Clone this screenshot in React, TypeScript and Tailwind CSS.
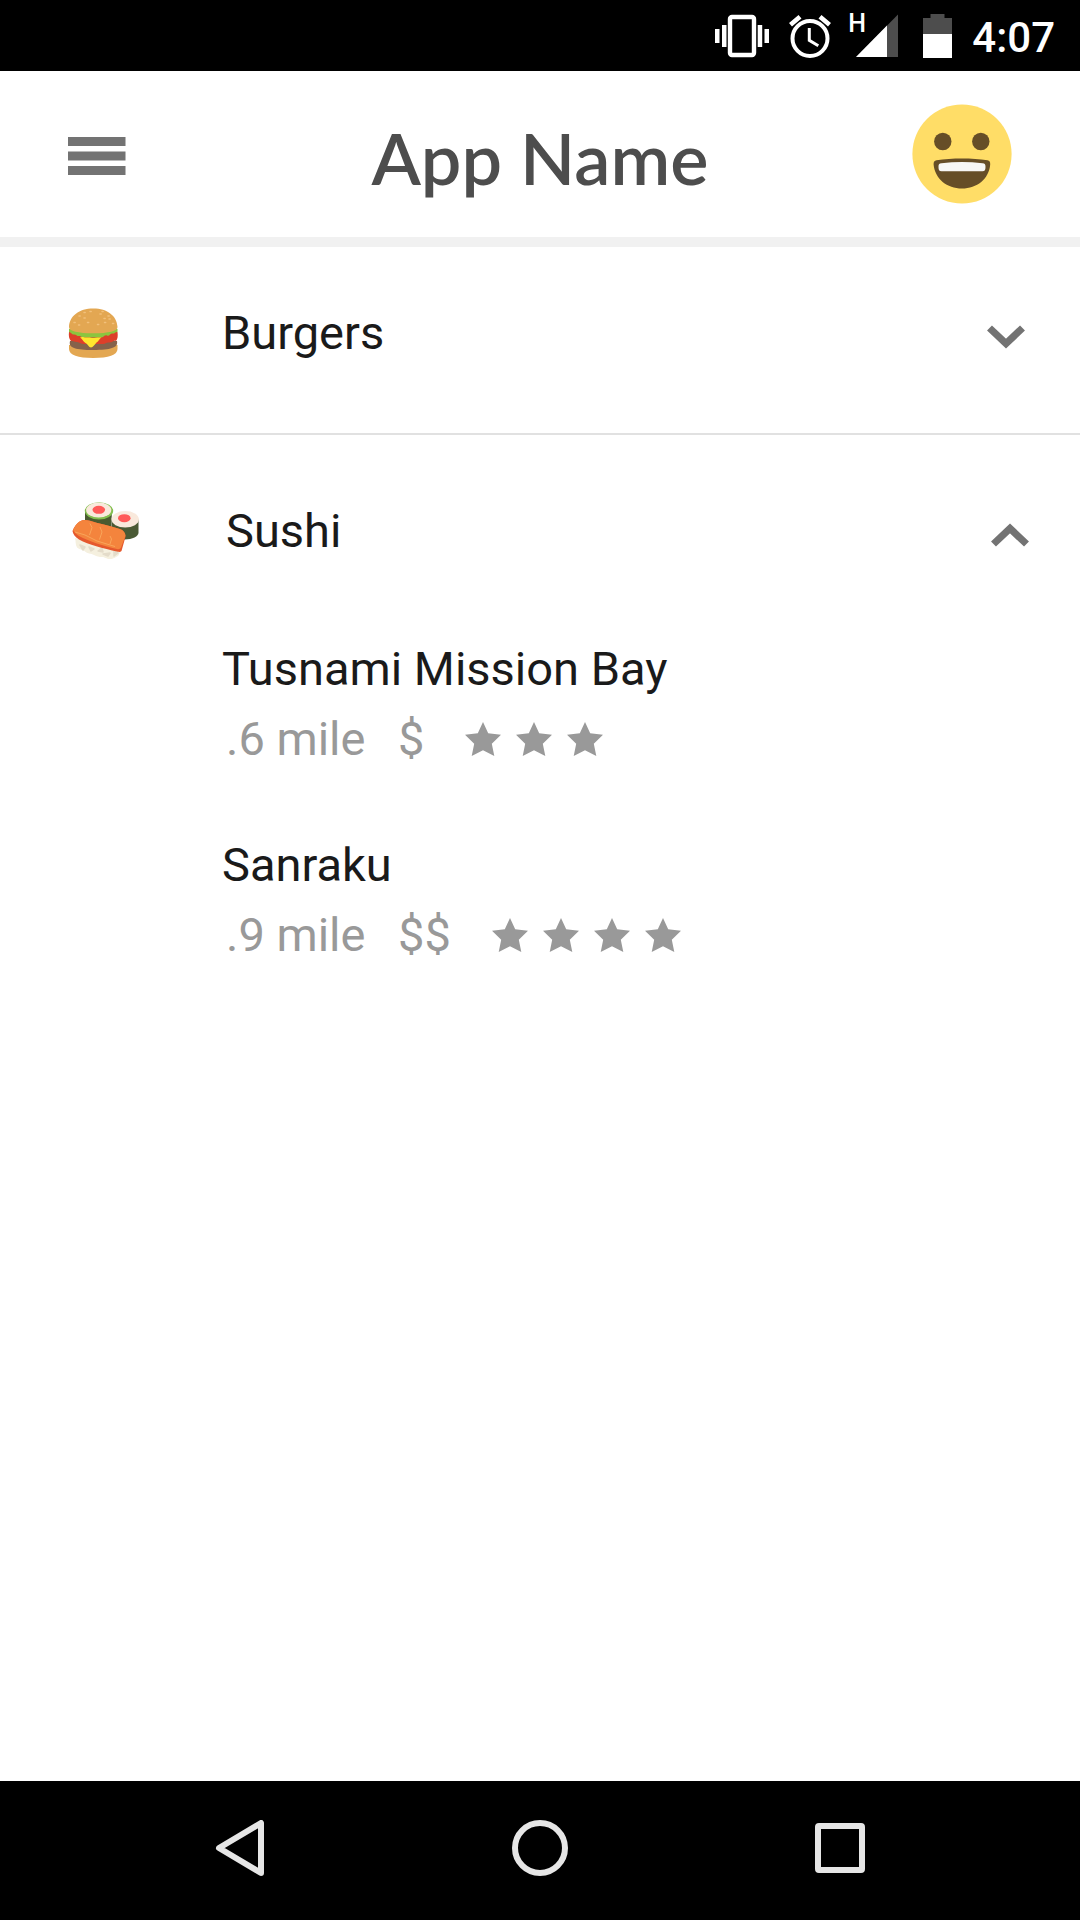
// App.tsx
import React, { useState } from "react";

interface Place {
  name: string;
  distance: string;
  price: string;
  stars: number;
}

const sushiPlaces: Place[] = [
  { name: "Tusnami Mission Bay", distance: ".6 mile", price: "$", stars: 3 },
  { name: "Sanraku", distance: ".9 mile", price: "$$", stars: 4 },
];

const StatusBar: React.FC = () => (
  <div className="flex h-[71px] items-center justify-end bg-black pr-[25px] text-white">
    {/* vibrate */}
    <svg className="mr-5 h-11 w-[54px]" viewBox="0 0 54 44" fill="currentColor">
      <rect x="15" y="3" width="24" height="38" rx="2" fill="none" stroke="currentColor" strokeWidth="4.4" />
      <path d="M0 15h4.5v14H0zM7 11h4.5v22H7zM42.700 11h4.500v22h-4.500zM49.500 15h4.500v14h-4.500z" />
    </svg>
    {/* alarm */}
    <svg className="mr-[17px] h-11 w-[42px]" viewBox="0 0 42 44" fill="none" stroke="currentColor">
      <circle cx="21" cy="24.500" r="17.500" strokeWidth="4" />
      <path d="M1.500 10.800L11 2.800M40.500 10.800L31 2.800" strokeWidth="4.600" />
      <path d="M20.300 14v12.300l9 5.400" strokeWidth="3" />
    </svg>
    {/* signal, with the network type over its corner */}
    <div className="relative mr-6">
      <svg className="h-11 w-[51px]" viewBox="-3 0 51 44" fill="currentColor">
        <path d="M5 43L47 0.500V43z" fill="#4d4d4d" />
        <path d="M5 43L36 11.600V43z" />
      </svg>
      <span className="absolute -top-1 left-0 text-[25px] leading-7 font-medium">H</span>
    </div>
    {/* battery */}
    <svg className="mr-5 h-11 w-[29px]" viewBox="0 0 29 44" fill="currentColor">
      <path d="M0 4h7.500V0h14v4H29v16H0z" fill="#4d4d4d" />
      <path d="M0 20h29v24H0z" />
    </svg>
    <span className="pt-1 text-[42px] leading-none font-medium">4:07</span>
  </div>
);

const FaceIcon: React.FC = () => (
  <svg className="h-[100px] w-[100px]" viewBox="0 0 100 100">
    <circle cx="50" cy="50" r="49.600" fill="#ffdd67" />
    <circle cx="30.800" cy="37.500" r="8.700" fill="#664e27" />
    <circle cx="68.800" cy="37.500" r="8.700" fill="#664e27" />
    <path
      d="M24.500 56.200C40 53.800 60 53.800 75.500 56.200C77.500 56.500 78.400 58 78.200 60.500C77 75 65 84.500 50 84.500S23 75 21.600 60.500C21.400 58 22.500 56.500 24.500 56.200z"
      fill="#664e27"
    />
    <path
      d="M29.500 59.200C43 57.600 57 57.600 70.500 59.200C73 59.500 73.600 60.500 73.500 63C73.400 66 73 67.300 70.500 67.300H29.500C27 67.300 26.600 66 26.500 63C26.400 60.500 27 59.500 29.500 59.200z"
      fill="#f7f7f5"
    />
  </svg>
);

const BurgerIcon: React.FC = () => (
  <svg className="h-[50px] w-[50px]" viewBox="0 0 50 50">
    <path d="M1 37h48.500v4c0 6-9 9-24.300 9S1 47 1 41z" fill="#e3a752" />
    <path d="M2 33h47c1.200 6-4 9-24 9S0.500 39 2 33z" fill="#85624b" />
    <path d="M1 24h48.500c0.500 4 .3 7-1.500 9-3-1-4 2-7 1.500s-3 1.500-6 1.500H16c-3 0-4-1.500-7-2s-4-1-6-1c-2-2-2.500-5-2-9z" fill="#dd3f2a" />
    <path d="M1 21h48.500v3c-2-.5-3 2-5 1.500s-3 3-5.500 2-4 2.800-7 2H16c-2.500.5-3-2-5-1.500s-3-2-5-1.500-3-2.500-5-2.500z" fill="#8bc53f" />
    <path d="M12 29.500c3-1.500 4 .5 7 0s5 1 7 .5 5-.5 7.500-.5c-2 1-3 4-5 5-2 2-3.500 5-5.500 5s-3-3-5.500-4.500-3-4-5.500-5.500z" fill="#ffe62e" />
    <path d="M1 19C1.500 8 11 0.500 25.300 0.500S49 8 49.500 19c.3 4-9 6.300-24.200 6.300S.7 23 1 19z" fill="#e3a752" />
    <path
      d="M16 4.500h1.200M22 3.500h1.200M11 8h1.200M16 10h1.200M6 14.500h1.200M10.500 17h1.200M19.500 14.500h1.200M34 3.500h1.200M32 6h1.200M40 8h1.200M36 10.500h1.200M41 11h1.200M36.500 14.500h1.200M44.500 15.500h1.200M29.500 16.500h1.200"
      stroke="#f2c07a"
      strokeWidth="1.500"
      strokeLinecap="round"
    />
  </svg>
);

const SushiIcon: React.FC = () => (
  <svg className="h-[58px] w-[68px]" viewBox="0 0 68 58">
    <path d="M13 9v14l26 4 1-18z" fill="#4a5a30" />
    <ellipse cx="27" cy="8.800" rx="14.200" ry="8.600" fill="#83bf4f" />
    <ellipse cx="26.700" cy="8" rx="12.600" ry="7.500" fill="#f9e9dc" />
    <ellipse cx="26.800" cy="7.800" rx="6.300" ry="4" fill="#ff5a58" />
    <path d="M39.500 17v16c3 3.500 7 4.500 13 4.500 8 0 14-3 14-7V17z" fill="#4a5a35" />
    <ellipse cx="53.200" cy="17.300" rx="13.700" ry="8.300" fill="#f9e9dc" />
    <ellipse cx="52.300" cy="16.200" rx="6.300" ry="4" fill="#ff5a58" />
    <path d="M3 36c1 3 0 6 2 9.500 3 2.500 6 2 8 4s6 2 9 3.500 5 2 8 2 4 2 8 2 5-2 8-3c2-2 1-4 3-6z" fill="#f5f0df" />
    <path
      d="M8 43l5 2-2 3zM17 45l5 2-3 2zM26 49l4-3 1 4zM31 52l5 2 2-3zM42 49l4 2-4 3z"
      fill="#e4dcca"
      stroke="#e4dcca"
      strokeWidth="1.500"
      strokeLinejoin="round"
    />
    <path d="M0.500 29C2 25 5 21 8 19.300c3-1.500 6-1.500 10-.500 8 2.500 19 5 29 8 4 1 6.500 4 6.500 8L49.500 49c-1 1-2 1-3.500.8C30 46 17 43 7 37.500 3 35 1 32 .5 29z" fill="#e5582d" />
    <path d="M1 28C3 24 5 21 8 19.300c3-1.500 6-1.500 10-.500 8 2.500 19 5 29 8 4 1 6.500 4 6.500 7L49 45.500c-1 1.500-2 2-4 1.500C30 43.500 17 39.500 7 34 4 32 2 30 1 28z" fill="#f4843d" />
    <path d="M18 21.500l2 4-2.500 7.500M28 25l2 5-2.500 7.500M38 34l1.500 3-1.500 5M3 30l10 3 12 6 18 5.500" fill="none" stroke="#f9a55a" strokeWidth="1" />
  </svg>
);

const Chevron: React.FC<{ open: boolean }> = ({ open }) => (
  <svg className="mt-2 h-6 w-[38px]" viewBox="0 0 38 24" fill="none" stroke="#737373" strokeWidth="7.200">
    {open ? <path d="M2.500 21L19 5.500L35.500 21" /> : <path d="M2.500 3L19 18.500L35.500 3" />}
  </svg>
);

const Stars: React.FC<{ count: number }> = ({ count }) => (
  <span className="flex gap-[15px]" role="img" aria-label={`${count} stars`}>
    {Array.from({ length: count }).map((_, i) => (
      <svg key={i} className="h-[34px] w-9" viewBox="0 0 36 34" fill="#999999">
        <path d="M18 0L23.200 11.300L36 12.700L26.800 21.700L29.300 34L18 28.300L6.700 34L9.200 21.700L0 12.700L12.800 11.300z" />
      </svg>
    ))}
  </span>
);

const App: React.FC = () => {
  const [burgersOpen, setBurgersOpen] = useState(false);
  const [sushiOpen, setSushiOpen] = useState(true);

  return (
    <div className="flex min-h-screen flex-col bg-white font-[Roboto,sans-serif] text-[#1a1a1a]">
      <StatusBar />

      <header className="grid h-44 grid-cols-[1fr_auto_1fr] items-center border-b-10 border-[#f1f1f1] px-[68px]">
        <button aria-label="Menu" className="justify-self-start pt-1">
          <svg className="h-[38px] w-[58px]" viewBox="0 0 58 38" fill="#737373">
            <path d="M0 0h57.500v9H0zM0 14.500h57.500v9H0zM0 29h57.500v9H0z" />
          </svg>
        </button>
        <h1 className="pt-[6px] font-[Lato,sans-serif] text-[72px] leading-none font-semibold text-[#4d4d4d]">App Name</h1>
        <button aria-label="Profile" className="justify-self-end">
          <FaceIcon />
        </button>
      </header>

      <main className="flex-1 text-[47px] leading-[56px]">
        <section className="border-b-2 border-[#e1e1e1]">
          <button
            onClick={() => setBurgersOpen(!burgersOpen)}
            aria-expanded={burgersOpen}
            className="flex w-full items-center pt-[58px] pr-[55px] pb-[72px] pl-[68px] text-left"
          >
            <span className="w-[154px]">
              <BurgerIcon />
            </span>
            <span className="flex-1">Burgers</span>
            <Chevron open={burgersOpen} />
          </button>
        </section>

        <section>
          <button
            onClick={() => setSushiOpen(!sushiOpen)}
            aria-expanded={sushiOpen}
            className="flex w-full items-center pt-[67px] pr-[51px] pl-[72px] text-left"
          >
            <span className="w-[154px]">
              <SushiIcon />
            </span>
            <span className="flex-1">Sushi</span>
            <Chevron open={sushiOpen} />
          </button>
          {sushiOpen && (
            <ul className="mt-[81px] flex flex-col gap-[70px] pl-[222px]">
              {sushiPlaces.map(p => (
                <li key={p.name} className="flex flex-col gap-[14px]">
                  <h2>{p.name}</h2>
                  <div className="flex items-center pl-1 text-[#999999]">
                    <span className="w-[172px]">{p.distance}</span>
                    <span className="mr-[41px]">{p.price}</span>
                    <Stars count={p.stars} />
                  </div>
                </li>
              ))}
            </ul>
          )}
        </section>
      </main>

      <nav className="grid h-[139px] grid-cols-3 items-center justify-items-center bg-black px-[90px] pb-[5px]">
        <button aria-label="Back">
          <svg className="h-14 w-14" viewBox="0 0 56 56" fill="none" stroke="#e6e6e6" strokeWidth="6" strokeLinejoin="round">
            <path d="M49 3V53L7 28z" />
          </svg>
        </button>
        <button aria-label="Home">
          <svg className="h-14 w-14" viewBox="0 0 56 56" fill="none" stroke="#e6e6e6" strokeWidth="6">
            <circle cx="28" cy="28" r="25" />
          </svg>
        </button>
        <button aria-label="Recent apps">
          <svg className="h-14 w-14" viewBox="0 0 56 56" fill="none" stroke="#e6e6e6" strokeWidth="6">
            <rect x="6" y="6" width="44" height="44" rx="1" />
          </svg>
        </button>
      </nav>
    </div>
  );
};

export default App;
